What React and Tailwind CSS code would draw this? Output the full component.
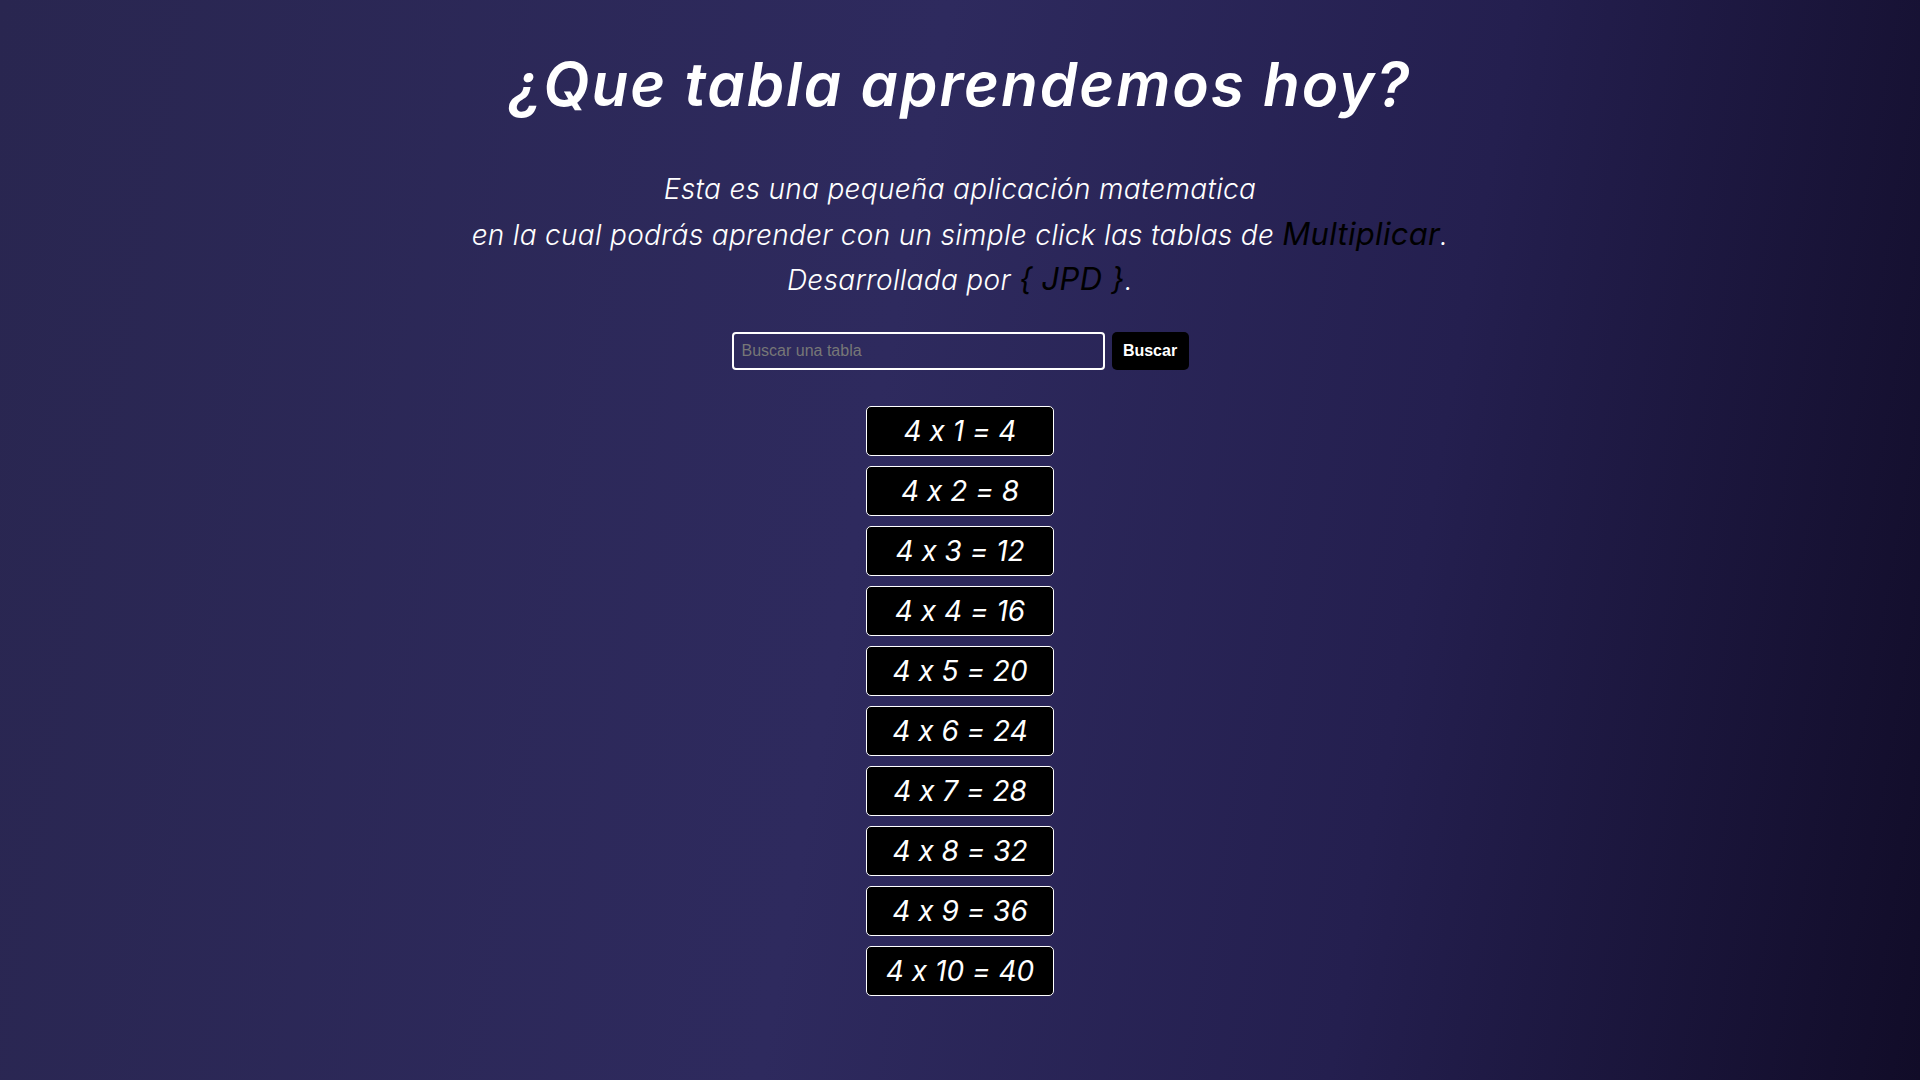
import React from "react";

export default function App() {
  const rows = Array.from({ length: 10 }, (_, i) => i + 1);
  return (
    <div
      className="min-h-screen w-full flex flex-col items-center bg-[linear-gradient(100deg,#292650_0%,#2e2a5e_45%,#241f4f_72%,#110c28_100%)] [font-family:Inter,'Noto_Sans',sans-serif] [font-feature-settings:'calt'_0]"
    >
      <h1 className="mt-[50px] text-[60px] leading-[68px] font-semibold italic text-white tracking-[2px]">
        ¿Que tabla aprendemos hoy?
      </h1>
      <div className="mt-[49px] flex flex-col items-center italic text-white text-[28px] font-light tracking-[0.3px]">
        <p className="leading-[45px]">Esta es una pequeña aplicación matematica</p>
        <p className="leading-[43px]">
          en la cual podrás aprender con un simple click las tablas de{" "}
          <span className="text-black text-[31px] font-normal">Multiplicar</span>.
        </p>
        <p className="leading-[43px]">
          Desarrollada por{" "}
          <span className="text-black text-[31px] font-normal">{"{ JPD }"}</span>.
        </p>
      </div>
      <div className="mt-[30px] flex items-center gap-[7px]">
        <input
          type="text"
          placeholder="Buscar una tabla"
          className="w-[373px] h-[38px] rounded-[4px] border-2 border-white bg-transparent px-[8px] text-[16px] text-white placeholder:text-[#777] outline-none [font-family:'Liberation_Sans',Arial,sans-serif]"
        />
        <button className="w-[77px] h-[38px] rounded-[5px] bg-black text-white font-bold text-[16px] [font-family:'Liberation_Sans',Arial,sans-serif]">
          Buscar
        </button>
      </div>
      <div className="mt-[36px] flex flex-col items-center gap-[10px]">
        {rows.map((n) => (
          <div
            key={n}
            className="w-[188px] h-[50px] rounded-[5px] border border-white bg-black flex items-center justify-center text-white italic text-[28px]"
          >
            4 x {n} = {4 * n}
          </div>
        ))}
      </div>
    </div>
  );
}
